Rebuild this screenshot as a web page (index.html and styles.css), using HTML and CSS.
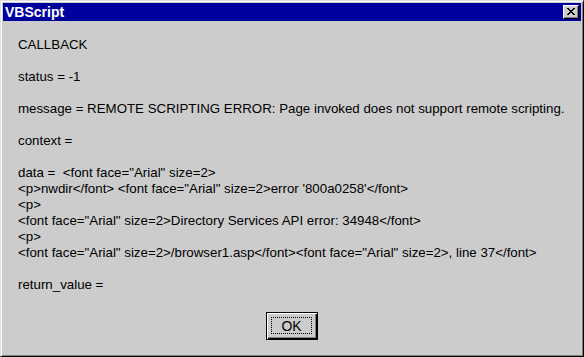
FILE: index.html
```html
<!DOCTYPE html>
<html lang="en">
<head>
    <meta charset="UTF-8">
    <title>VBScript</title>
    <link rel="stylesheet" href="styles.css">
</head>
<body>
    <div class="window">
        <div class="title-bar">
            <span class="title">VBScript</span>
            <div class="close-btn">
                <svg width="8" height="7" viewBox="0 0 8 7">
                    <path d="M0 0h2v1h1v1h2v-1h1v-1h2v1h-1v1h-1v1h-1v1h1v1h1v1h1v1h-2v-1h-1v-1h-2v1h-1v1h-2v-1h1v-1h1v-1h1v-1h-1v-1h-1v-1h-1z" fill="#000"/>
                </svg>
            </div>
        </div>

        <div class="content">
            <p>CALLBACK</p>
            <p>status = -1</p>
            <p>message = REMOTE SCRIPTING ERROR: Page invoked does not support remote scripting.</p>
            <p>context =</p>
            <p>data =  &lt;font face="Arial" size=2&gt;<br>&lt;p&gt;nwdir&lt;/font&gt; &lt;font face="Arial" size=2&gt;error '800a0258'&lt;/font&gt;<br>&lt;p&gt;<br>&lt;font face="Arial" size=2&gt;Directory Services API error: 34948&lt;/font&gt;<br>&lt;p&gt;<br>&lt;font face="Arial" size=2&gt;/browser1.asp&lt;/font&gt;&lt;font face="Arial" size=2&gt;, line 37&lt;/font&gt;</p>
            <p>return_value =</p>
        </div>

        <div class="buttons">
            <button class="ok-btn"><span class="focus">OK</span></button>
        </div>
    </div>
</body>
</html>
```

FILE: styles.css
```css
* {
    margin: 0;
    padding: 0;
    box-sizing: border-box;
}

html, body {
    width: 584px;
    height: 357px;
    overflow: hidden;
}

body {
    font-family: 'Liberation Sans', Arial, sans-serif;
    background: #cccccc;
}

.window {
    width: 584px;
    height: 357px;
    background: #cccccc;
    border: 1px solid;
    border-color: #dfdfdf #000 #000 #dfdfdf;
    box-shadow: inset 1px 1px 0 #fff, inset -1px -1px 0 #808080;
    padding: 2px;
    display: flex;
    flex-direction: column;
}

.title-bar {
    height: 18px;
    background: #00009c;
    display: flex;
    align-items: center;
    justify-content: space-between;
    padding: 0 2px 0 2px;
}

.title {
    color: #fff;
    font-weight: bold;
    font-size: 14px;
}

.close-btn {
    width: 16px;
    height: 14px;
    background: #cccccc;
    border: 1px solid;
    border-color: #fff #000 #000 #fff;
    box-shadow: inset -1px -1px 0 #808080;
    display: flex;
    align-items: center;
    justify-content: center;
}

.close-btn svg {
    display: block;
    margin: 0 1px 1px 0;
}

.content {
    padding: 16px 0 0 15px;
    font-size: 13.3px;
    line-height: 16px;
    color: #000;
}

.content p {
    margin-bottom: 16px;
    white-space: pre;
}

.buttons {
    display: flex;
    justify-content: center;
    padding-top: 3px;
}

.ok-btn {
    width: 52px;
    height: 28px;
    background: #cccccc;
    border: 1px solid #000;
    box-shadow: inset 1px 1px 0 #fff, inset -1px -1px 0 #000, inset -2px -2px 0 #808080;
    font-family: 'Liberation Sans', Arial, sans-serif;
    font-size: 14px;
    color: #000;
    padding: 4px 5px 5px 4px;
    display: flex;
}

.focus {
    flex: 1;
    border: 1px dotted #000;
    display: flex;
    align-items: center;
    justify-content: center;
}
```
